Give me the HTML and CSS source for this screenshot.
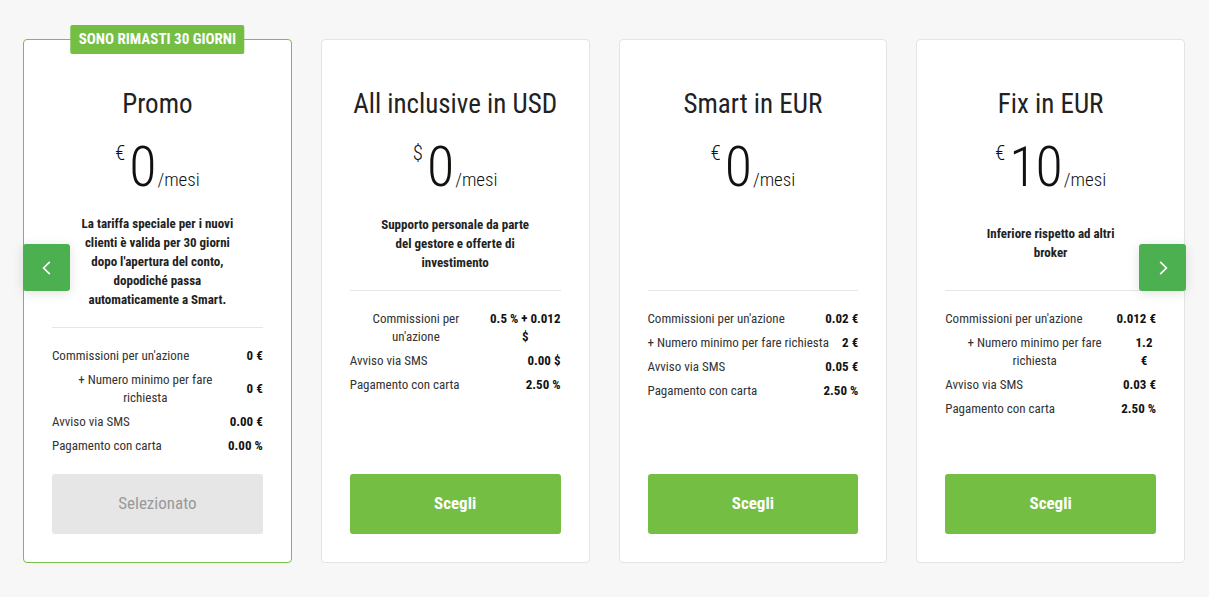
FILE: index.html
```html
<!DOCTYPE html>
<html lang="it">
<head>
<meta charset="utf-8">
<title>Tariffe</title>
<link rel="stylesheet" href="styles.css">
</head>
<body>
<div class="plans">
  <div class="card active">
    <div class="badge">SONO RIMASTI 30 GIORNI</div>
    <h2 class="title">Promo</h2>
    <div class="price"><span class="cur">€</span><span class="amt">0</span><span class="per">/mesi</span></div>
    <div class="desc"><p>La tariffa speciale per i nuovi<br>clienti è valida per 30 giorni<br>dopo l'apertura del conto,<br>dopodiché passa<br>automaticamente a Smart.</p></div>
    <div class="fees">
      <div class="row"><span class="lbl">Commissioni per un'azione</span><span class="val">0 €</span></div>
      <div class="row"><span class="lbl c">+ Numero minimo per fare<br>richiesta</span><span class="val">0 €</span></div>
      <div class="row"><span class="lbl">Avviso via SMS</span><span class="val">0.00 €</span></div>
      <div class="row"><span class="lbl">Pagamento con carta</span><span class="val">0.00 %</span></div>
    </div>
    <button class="btn selected">Selezionato</button>
  </div>
  <div class="card">
    <h2 class="title">All inclusive in USD</h2>
    <div class="price"><span class="cur">$</span><span class="amt">0</span><span class="per">/mesi</span></div>
    <div class="desc"><p>Supporto personale da parte<br>del gestore e offerte di<br>investimento</p></div>
    <div class="fees">
      <div class="row"><span class="lbl c">Commissioni per<br>un'azione</span><span class="val c">0.5 % + 0.012<br>$</span></div>
      <div class="row"><span class="lbl">Avviso via SMS</span><span class="val">0.00 $</span></div>
      <div class="row"><span class="lbl">Pagamento con carta</span><span class="val">2.50 %</span></div>
    </div>
    <button class="btn">Scegli</button>
  </div>
  <div class="card">
    <h2 class="title">Smart in EUR</h2>
    <div class="price"><span class="cur">€</span><span class="amt">0</span><span class="per">/mesi</span></div>
    <div class="desc"></div>
    <div class="fees">
      <div class="row"><span class="lbl">Commissioni per un'azione</span><span class="val">0.02 €</span></div>
      <div class="row"><span class="lbl nowrap">+ Numero minimo per fare richiesta</span><span class="val">2 €</span></div>
      <div class="row"><span class="lbl">Avviso via SMS</span><span class="val">0.05 €</span></div>
      <div class="row"><span class="lbl">Pagamento con carta</span><span class="val">2.50 %</span></div>
    </div>
    <button class="btn">Scegli</button>
  </div>
  <div class="card">
    <h2 class="title">Fix in EUR</h2>
    <div class="price"><span class="cur">€</span><span class="amt">10</span><span class="per">/mesi</span></div>
    <div class="desc"><p>Inferiore rispetto ad altri<br>broker</p></div>
    <div class="fees">
      <div class="row"><span class="lbl">Commissioni per un'azione</span><span class="val">0.012 €</span></div>
      <div class="row"><span class="lbl c">+ Numero minimo per fare<br>richiesta</span><span class="val c narrow">1.2<br>€</span></div>
      <div class="row"><span class="lbl">Avviso via SMS</span><span class="val">0.03 €</span></div>
      <div class="row"><span class="lbl">Pagamento con carta</span><span class="val">2.50 %</span></div>
    </div>
    <button class="btn">Scegli</button>
  </div>
  <button class="arrow prev" aria-label="Precedente"><svg viewBox="0 0 16 16" width="16" height="16"><path d="M10.5 2.5 5 8l5.5 5.5" fill="none" stroke="#fff" stroke-width="1.5"/></svg></button>
  <button class="arrow next" aria-label="Successivo"><svg viewBox="0 0 16 16" width="16" height="16"><path d="M5.5 2.5 11 8l-5.5 5.5" fill="none" stroke="#fff" stroke-width="1.5"/></svg></button>
</div>
</body>
</html>
```
FILE: styles.css
```css
* { box-sizing: border-box; }
html, body { margin: 0; padding: 0; }
body {
  background: #f7f7f7;
  font-family: "Liberation Sans Narrow", "Roboto Condensed", "DejaVu Sans Condensed", "Liberation Sans", sans-serif;
  color: #222;
  width: 1209px;
  height: 597px;
  overflow: hidden;
}
.plans {
  position: relative;
  display: grid;
  grid-template-columns: repeat(4, 1fr);
  column-gap: 29px;
  padding: 39px 24px 0 23px;
}
.card {
  position: relative;
  display: flex;
  flex-direction: column;
  background: #fff;
  border: 1px solid #e4e4e4;
  border-radius: 4px;
  padding: 49px 28px 28px;
  height: 524px;
}
.card.active { border-color: #78c04a; }
.badge {
  position: absolute;
  top: -15px;
  left: 50%;
  transform: translateX(-50%);
  background: #74be44;
  color: #fff;
  font-weight: 700;
  font-size: 15px;
  line-height: 29px;
  padding: 0 8px;
  border-radius: 2px;
  white-space: nowrap;
}
.title {
  margin: 0;
  text-align: center;
  font-size: 27px;
  line-height: 30px;
  font-weight: 400;
  color: #222;
}
.price {
  display: flex;
  justify-content: center;
  align-items: baseline;
  margin-top: 20px;
  height: 56px;
  font-weight: 300;
  color: #111;
}
.cur {
  font-size: 21px;
  align-self: flex-start;
  margin-top: 2px;
  margin-right: 4px;
}
.amt { font-size: 56px; line-height: 56px; letter-spacing: -1px; }
.per { font-size: 19px; margin-left: 2px; }
.desc {
  display: flex;
  align-items: center;
  justify-content: center;
  min-height: 58px;
  margin-top: 19px;
  margin-bottom: 18px;
}
.desc p {
  margin: 0;
  text-align: center;
  font-size: 13px;
  line-height: 19px;
  font-weight: 700;
  color: #222;
}
.fees {
  border-top: 1px solid #e6e6e6;
  padding-top: 16px;
}
.row {
  display: grid;
  grid-template-columns: 1fr auto;
  column-gap: 8px;
  align-items: center;
  padding: 3px 0;
  font-size: 13px;
  line-height: 18px;
}
.lbl { color: #333; }
.nowrap { white-space: nowrap; }
.val { color: #111; font-weight: 700; text-align: right; }
.c { text-align: center; }
.narrow { min-width: 24px; }
.btn {
  margin-top: auto;
  height: 60px;
  border: 0;
  border-radius: 3px;
  background: #74be44;
  color: #fff;
  font-family: inherit;
  font-size: 17px;
  line-height: 20px;
  font-weight: 700;
  padding: 0 0 3px;
  cursor: pointer;
}
.btn.selected {
  background: #e6e6e6;
  color: #999;
  font-weight: 400;
}
.arrow {
  position: absolute;
  top: 244px;
  width: 47px;
  height: 47px;
  border: 0;
  border-radius: 3px;
  background: #4caf50;
  display: flex;
  align-items: center;
  justify-content: center;
  padding: 0;
  box-shadow: 0 2px 12px rgba(0,0,0,0.12);
  cursor: pointer;
}
.arrow svg { display: block; width: 18px; height: 18px; }
.arrow.prev { left: 23px; }
.arrow.next { left: 1139px; }
```
